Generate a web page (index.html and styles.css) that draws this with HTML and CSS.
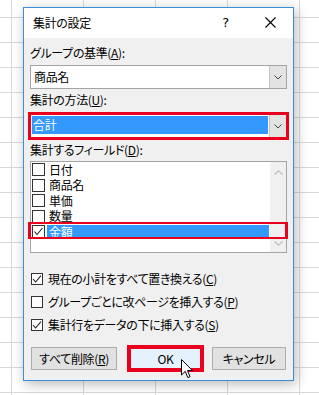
FILE: index.html
```html
<!DOCTYPE html>
<html lang="ja">
<head>
<meta charset="utf-8">
<link rel="stylesheet" href="styles.css">
</head>
<body>
<div class="dialog">
  <div class="titlebar">
    <div class="title">集計の設定</div>
    <div class="tbtn help">?</div>
    <div class="tbtn close">
      <svg width="11" height="11" viewBox="0 0 11 11"><path d="M0.5 0.5 L10.5 10.5 M10.5 0.5 L0.5 10.5" stroke="#000" stroke-width="1.1" fill="none"/></svg>
    </div>
  </div>
  <div class="body">
    <div class="label l1">グループの基準(<u>A</u>):</div>
    <div class="combo">
      <div class="combo-text">商品名</div>
      <div class="drop"><svg width="8" height="5" viewBox="0 0 8 5"><polyline points="0.5,0.5 4,4 7.5,0.5" stroke="#444" fill="none"/></svg></div>
    </div>
    <div class="label l2">集計の方法(<u>U</u>):</div>
    <div class="combo hl">
      <div class="combo-sel">合計</div>
      <div class="drop"><svg width="8" height="5" viewBox="0 0 8 5"><polyline points="0.5,0.5 4,4 7.5,0.5" stroke="#444" fill="none"/></svg></div>
    </div>
    <div class="label l3">集計するフィールド(<u>D</u>):</div>
    <div class="list">
      <div class="items">
        <div class="item"><span class="cb"></span><span class="itext">日付</span></div>
        <div class="item"><span class="cb"></span><span class="itext">商品名</span></div>
        <div class="item"><span class="cb"></span><span class="itext">単価</span></div>
        <div class="item"><span class="cb"></span><span class="itext">数量</span></div>
        <div class="item sel"><span class="cb"><svg width="11" height="11" viewBox="0 0 11 11"><polyline points="1.5,5.5 4,8.5 9.5,2" stroke="#222" stroke-width="1.1" fill="none"/></svg></span><span class="itext">金額</span></div>
      </div>
      <div class="scroll">
        <svg class="up" width="9" height="5" viewBox="0 0 9 5"><polyline points="0.5,4.5 4.5,0.8 8.5,4.5" stroke="#bfbfbf" stroke-width="1.2" fill="none"/></svg>
        <svg class="down" width="9" height="5" viewBox="0 0 9 5"><polyline points="0.5,0.5 4.5,4.2 8.5,0.5" stroke="#bfbfbf" stroke-width="1.2" fill="none"/></svg>
      </div>
      <span class="rowmark"></span>
    </div>
    <div class="checks">
      <div class="crow"><span class="cb2"><svg width="10" height="10" viewBox="0 0 10 10"><polyline points="1,5 3.6,8 9,1.6" stroke="#222" stroke-width="1.1" fill="none"/></svg></span>現在の小計をすべて置き換える(<u>C</u>)</div>
      <div class="crow"><span class="cb2"></span>グループごとに改ページを挿入する(<u>P</u>)</div>
      <div class="crow"><span class="cb2"><svg width="10" height="10" viewBox="0 0 10 10"><polyline points="1,5 3.6,8 9,1.6" stroke="#222" stroke-width="1.1" fill="none"/></svg></span>集計行をデータの下に挿入する(<u>S</u>)</div>
    </div>
    <div class="buttons">
      <div class="btn b-del">すべて削除(<u>R</u>)</div>
      <div class="btn b-ok">OK</div>
      <div class="btn b-cancel">キャンセル</div>
      <svg class="cursor" width="13" height="20" viewBox="0 0 13 20"><path d="M0.5 0.5 L0.5 16 L4.2 12.4 L6.8 18.6 L9 17.7 L6.5 11.6 L11.5 11.6 Z" fill="#fff" stroke="#000" stroke-width="1" stroke-linejoin="miter"/></svg>
    </div>
  </div>
</div>
</body>
</html>
```

FILE: styles.css
```css
html, body {
  margin: 0;
  padding: 0;
}
body {
  width: 319px;
  height: 395px;
  overflow: hidden;
  background-color: #fff;
  background-image:
    linear-gradient(to right, #d9d9d9 1px, transparent 1px),
    linear-gradient(to bottom, #d9d9d9 1px, transparent 1px);
  background-size: 72px 100%, 100% 25px;
  background-position: 11px 0, 0 17px;
  font-family: "Noto Sans CJK JP", "Noto Sans", sans-serif;
  font-size: 12px;
  letter-spacing: -0.35px;
  font-feature-settings: "palt";
  color: #000;
}
.dialog {
  position: relative;
  top: 7px;
  left: 23px;
  width: 269px;
  border: 1px solid #3a8ed8;
  background: #f0f0f0;
  box-shadow: 2px 3px 12px rgba(0, 0, 0, 0.28);
}
.titlebar {
  display: flex;
  align-items: center;
  height: 30px;
  background: #fff;
}
.title {
  flex: 1;
  padding-left: 9px;
  line-height: 30px;
  margin-top: -1px;
}
.tbtn {
  width: 45px;
  height: 30px;
  display: flex;
  align-items: center;
  justify-content: center;
}
.help {
  font-family: "DejaVu Sans", sans-serif;
  font-size: 13px;
  margin-top: -1px;
}
.close svg {
  display: block;
  margin-top: -1px;
}
.body {
  position: relative;
  padding: 0 6px 10px 6px;
}
.label {
  height: 16px;
  line-height: 16px;
}
.l1 { margin-top: 7px; }
.l2 { margin-top: 3px; }
.l3 { margin-top: 4px; }
u { text-decoration: underline; text-underline-offset: 1px; }
.combo {
  box-sizing: border-box;
  height: 24px;
  border: 1px solid #a5a5a5;
  background: #fff;
  display: flex;
  margin-top: 4px;
}
.combo.hl {
  margin-top: 6px;
  outline: 3px solid #e8001c;
  outline-offset: -1px;
}
.combo-text {
  flex: 1;
  padding-left: 3px;
  line-height: 22px;
}
.combo-sel {
  flex: 1;
  margin: 1px 1px 3px 1px;
  padding-left: 1px;
  background: #3399ff;
  color: #fff;
  line-height: 17px;
}
.drop {
  box-sizing: border-box;
  width: 17px;
  background: #e3e3e3;
  border-left: 1px solid #c4c4c4;
  display: flex;
  align-items: center;
  justify-content: center;
}
.drop svg { display: block; }
.list {
  position: relative;
  box-sizing: border-box;
  height: 92px;
  margin-top: 3px;
  border: 1px solid #a5a5a5;
  background: #fff;
  display: flex;
}
.items {
  flex: 1;
}
.item {
  display: flex;
  align-items: center;
  height: 15.5px;
  padding-left: 1px;
}
.cb {
  box-sizing: border-box;
  width: 13px;
  height: 13px;
  border: 1px solid #333;
  background: #fff;
  display: flex;
  align-items: center;
  justify-content: center;
}
.cb svg, .cb2 svg { display: block; }
.itext {
  flex: 1;
  margin-left: 2px;
  margin-right: 1px;
  padding-left: 2px;
  line-height: 14px;
}
.item.sel .itext {
  background: #3399ff;
  color: #fff;
}
.scroll {
  width: 16px;
  background: #f0f0f0;
  display: flex;
  flex-direction: column;
  align-items: center;
  justify-content: space-between;
  padding: 8px 0 6px;
  box-sizing: border-box;
}
.scroll svg { display: block; }
.rowmark {
  position: absolute;
  left: -3px;
  top: 60px;
  width: 260px;
  height: 17px;
  box-sizing: border-box;
  border: solid #e8001c;
  border-width: 2px 3px;
}
.checks {
  margin-top: 14px;
}
.crow {
  display: flex;
  align-items: center;
  height: 23px;
  white-space: nowrap;
}
.cb2 {
  box-sizing: border-box;
  width: 12px;
  height: 12px;
  margin-left: 1px;
  margin-right: 5px;
  border: 1px solid #333;
  background: #fff;
  display: flex;
  align-items: center;
  justify-content: center;
}
.buttons {
  position: relative;
  display: flex;
  margin-top: 11px;
}
.btn {
  box-sizing: border-box;
  height: 23px;
  border: 1px solid #adadad;
  background: #e1e1e1;
  display: flex;
  align-items: center;
  justify-content: center;
  line-height: 21px;
}
.b-del {
  width: 86px;
  margin-left: 1px;
}
.b-ok {
  width: 73px;
  margin-left: 12px;
  background: #e5f1fb;
  border: 2px solid #0078d7;
  outline: 4px solid #e8001c;
  outline-offset: -2px;
}
.b-cancel {
  width: 74px;
  margin-left: 10px;
}
.cursor {
  position: absolute;
  left: 151px;
  top: 12px;
}
```
